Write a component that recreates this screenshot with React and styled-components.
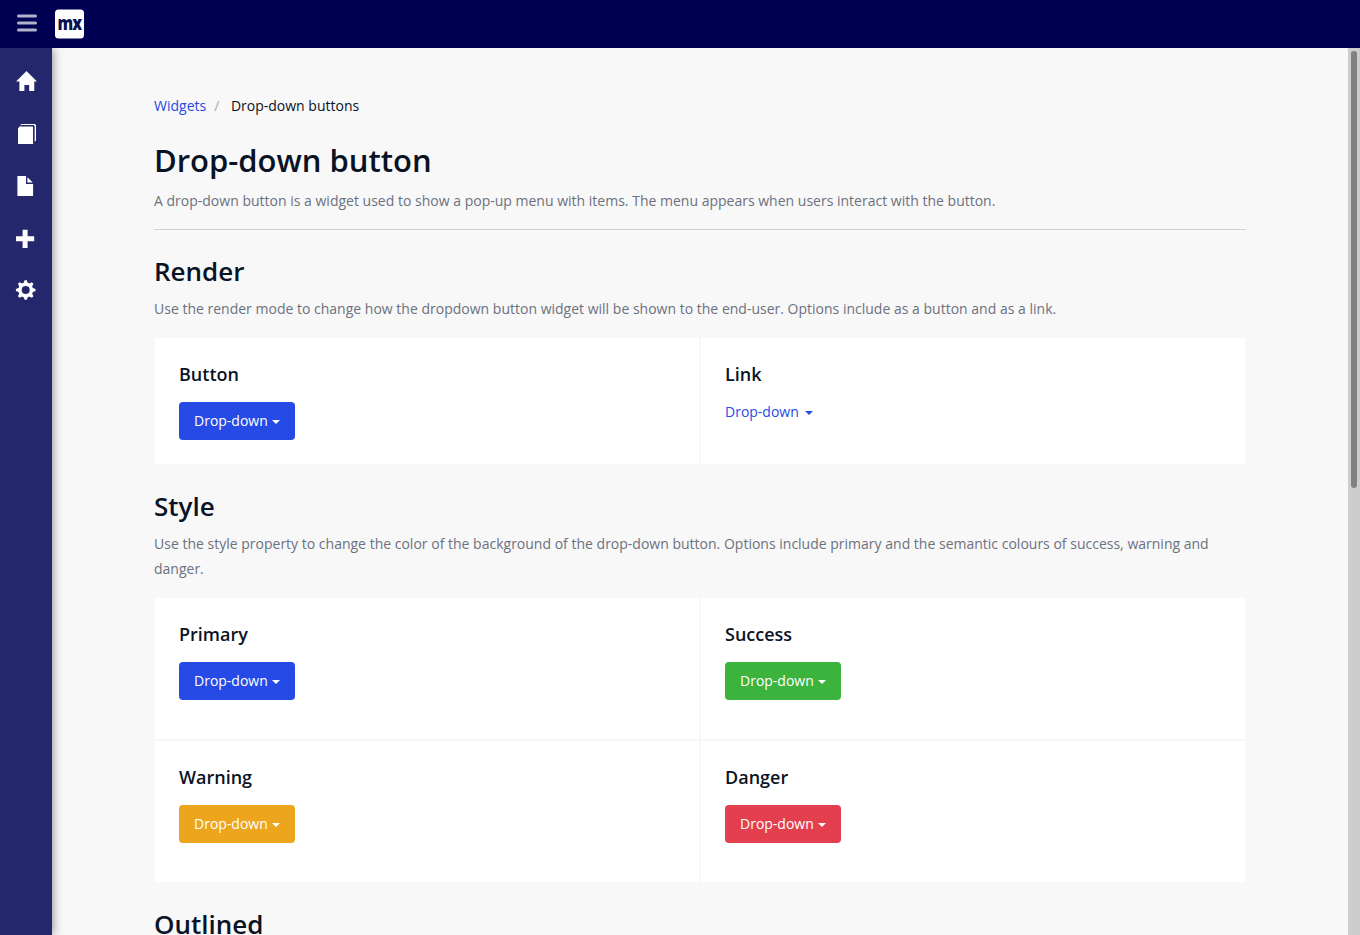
import React from "react";
import styled, { createGlobalStyle } from "styled-components";

const GlobalStyle = createGlobalStyle`
  *, *::before, *::after { box-sizing: border-box; }
  body {
    margin: 0;
    background: #f8f8f8;
    color: #0a1325;
    font: 14px/20px "Open Sans", sans-serif;
    overflow: hidden;
  }
`;

const Page = styled.div`
  display: flex;
  flex-direction: column;
  height: 100vh;
  overflow: hidden;
`;

const Topbar = styled.header`
  display: flex;
  align-items: center;
  flex: 0 0 48px;
  padding-left: 17px;
  background: #000053;
`;

const MenuButton = styled.button`
  display: flex;
  margin: 0 18px 2px 0;
  padding: 0;
  border: 0;
  background: none;
  color: #b2b2cb;
`;

const Body = styled.div`
  display: flex;
  flex: 1;
  min-height: 0;
`;

const Sidebar = styled.nav`
  display: flex;
  flex-direction: column;
  flex: 0 0 52px;
  padding-top: 8px;
  background: #24276c;
  box-shadow: 0 0 10px rgba(0, 0, 0, 0.5);
  clip-path: inset(0 -14px 0 0);
`;

const NavItem = styled.a`
  display: flex;
  align-items: center;
  justify-content: center;
  height: 52px;
  color: #fff;
`;

const Main = styled.main`
  flex: 1;
  padding: 48px 102px 0;
  overflow: hidden;
`;

const Breadcrumb = styled.div`
  display: flex;
  height: 20px;
`;

const Crumb = styled.a`
  color: #264ae5;
`;

const Separator = styled.span`
  padding: 0 11.6px 0 8px;
  color: #a9acb3;
`;

const Title = styled.h1`
  margin: 23px 0 0;
  font-size: 31px;
  line-height: 42px;
  font-weight: 600;
`;

const Text = styled.p`
  margin: 0;
  color: #6c717e;
  line-height: 25px;
  word-spacing: 0.03px;
`;

const Intro = styled(Text)`
  margin-top: 7px;
  padding-bottom: 16px;
  border-bottom: 1px solid #ced0d3;
`;

const Section = styled.section`
  padding-top: 24px;
`;

const Heading = styled.h2`
  margin: 0 0 8px;
  font-size: 26px;
  line-height: 34px;
  font-weight: 600;
`;

const Cards = styled.div`
  display: grid;
  grid-template-columns: 1fr 1fr;
  grid-auto-rows: ${(p) => p.$rowHeight}px;
  margin-top: 16px;
`;

const Card = styled.div`
  padding: 24px;
  border: 1px solid #f8f8f8;
  background: #fff;
`;

const CardTitle = styled.h4`
  margin: 0 0 16px;
  font-size: 18px;
  line-height: 24px;
  font-weight: 600;
`;

const COLORS = {
  primary: "#264ae5",
  success: "#3cb33d",
  warning: "#eca51c",
  danger: "#e33f4e",
};

const Button = styled.button`
  display: flex;
  align-items: center;
  gap: 4px;
  height: 38px;
  padding: 0 15px;
  border: 0;
  border-radius: 4px;
  background: ${(p) => COLORS[p.$variant]};
  color: #fff;
  font: inherit;
`;

const LinkButton = styled.a`
  display: flex;
  align-items: center;
  gap: 6px;
  height: 20px;
  color: #264ae5;
`;

const Caret = styled.span`
  width: 8px;
  margin-top: 2px;
  border: 4px solid transparent;
  border-top-color: currentColor;
  border-bottom: 0;
`;

const Scrollbar = styled.div`
  flex: 0 0 12px;
  padding: 3px;
  background: #cdcdcd;
`;

const Thumb = styled.div`
  height: 437px;
  border-radius: 3px;
  background: #7f8282;
`;

const LogoMark = styled.svg`
  overflow: visible;
`;

const Logo = () => (
  <LogoMark width="29" height="30" viewBox="0 0 29 30">
    <rect width="29" height="29" y="0.5" rx="3.5" fill="#fff" />
    <text
      x="2.4"
      y="20.6"
      fill="#0a1252"
      fontFamily="Open Sans"
      fontSize="20"
      fontWeight="800"
      textLength="24"
      lengthAdjust="spacingAndGlyphs"
      letterSpacing="-1"
    >
      mx
    </text>
  </LogoMark>
);

const MenuIcon = () => (
  <svg width="20" height="18" viewBox="0 0 20 18">
    <path
      d="M1.5 2h17M1.5 9h17M1.5 16h17"
      stroke="currentColor"
      strokeWidth="3"
      strokeLinecap="round"
    />
  </svg>
);

const HomeIcon = () => (
  <svg width="22" height="22" viewBox="0 0 22 22" fill="currentColor">
    <path d="M11.5 0 22 10.6h-2.7V20h-5.1v-6h-4.8v6H4.4v-9.4H1z" />
  </svg>
);

const CopyIcon = () => (
  <svg width="22" height="22" viewBox="0 0 22 22" fill="currentColor">
    <path d="M3 5.3 5.3 3H17.5Q18.2 3 18.2 3.8V21H3z" />
    <path d="M4.4 2.9 6.3 1H19.5Q21 1 21 2.5V17.5L19.5 19V3.4Q19.5 2 18 2H6Z" />
    <path d="M5.5 2.8H18Q18.7 2.8 18.7 3.5V20.5" fill="none" stroke="#24276c" strokeWidth="1.2" />
  </svg>
);

const FileIcon = () => (
  <svg width="22" height="22" viewBox="0 0 22 22" fill="currentColor">
    <path d="M2.4 1H11v8h7.1v12H2.4z" />
    <path d="M12.4 2.2 17.8 7.6h-5.4z" />
  </svg>
);

const PlusIcon = () => (
  <svg width="22" height="22" viewBox="0 0 22 22" fill="currentColor">
    <path d="M7.6 2.7h5v6.6h6.6v5h-6.6v6.6h-5v-6.6H1v-5h6.6z" />
  </svg>
);

const TEETH = [0, 45, 90, 135, 180, 225, 270, 315];

const GearIcon = () => (
  <svg width="22" height="22" viewBox="0 0 22 22" fill="currentColor">
    <g transform="translate(10.7 11)">
      {TEETH.map((angle) => (
        <path key={angle} d="M-2.4-6-1.1-9.8H1.1L2.4-6z" transform={`rotate(${angle})`} />
      ))}
      <circle r="5.7" fill="none" stroke="currentColor" strokeWidth="3.4" />
    </g>
  </svg>
);

const NAV = [HomeIcon, CopyIcon, FileIcon, PlusIcon, GearIcon];

const STYLES = [
  ["Primary", "primary"],
  ["Success", "success"],
  ["Warning", "warning"],
  ["Danger", "danger"],
];

const DropButton = ({ variant }) => (
  <Button $variant={variant}>
    Drop-down
    <Caret />
  </Button>
);

export default function App() {
  return (
    <Page>
      <GlobalStyle />
      <Topbar>
        <MenuButton aria-label="Toggle menu">
          <MenuIcon />
        </MenuButton>
        <Logo />
      </Topbar>
      <Body>
        <Sidebar>
          {NAV.map((Icon, i) => (
            <NavItem key={i}>
              <Icon />
            </NavItem>
          ))}
        </Sidebar>
        <Main>
          <Breadcrumb>
            <Crumb>Widgets</Crumb>
            <Separator>/</Separator>
            <span>Drop-down buttons</span>
          </Breadcrumb>
          <Title>Drop-down button</Title>
          <Intro>
            A drop-down button is a widget used to show a pop-up menu with items. The menu appears
            when users interact with the button.
          </Intro>
          <Section>
            <Heading>Render</Heading>
            <Text>
              Use the render mode to change how the dropdown button widget will be shown to the
              end-user. Options include as a button and as a link.
            </Text>
            <Cards $rowHeight={128}>
              <Card>
                <CardTitle>Button</CardTitle>
                <DropButton variant="primary" />
              </Card>
              <Card>
                <CardTitle>Link</CardTitle>
                <LinkButton>
                  Drop-down
                  <Caret />
                </LinkButton>
              </Card>
            </Cards>
          </Section>
          <Section>
            <Heading>Style</Heading>
            <Text>
              Use the style property to change the color of the background of the drop-down button.
              Options include primary and the semantic colours of success, warning and danger.
            </Text>
            <Cards $rowHeight={143}>
              {STYLES.map(([label, variant]) => (
                <Card key={variant}>
                  <CardTitle>{label}</CardTitle>
                  <DropButton variant={variant} />
                </Card>
              ))}
            </Cards>
          </Section>
          <Section>
            <Heading>Outlined</Heading>
          </Section>
        </Main>
        <Scrollbar>
          <Thumb />
        </Scrollbar>
      </Body>
    </Page>
  );
}
